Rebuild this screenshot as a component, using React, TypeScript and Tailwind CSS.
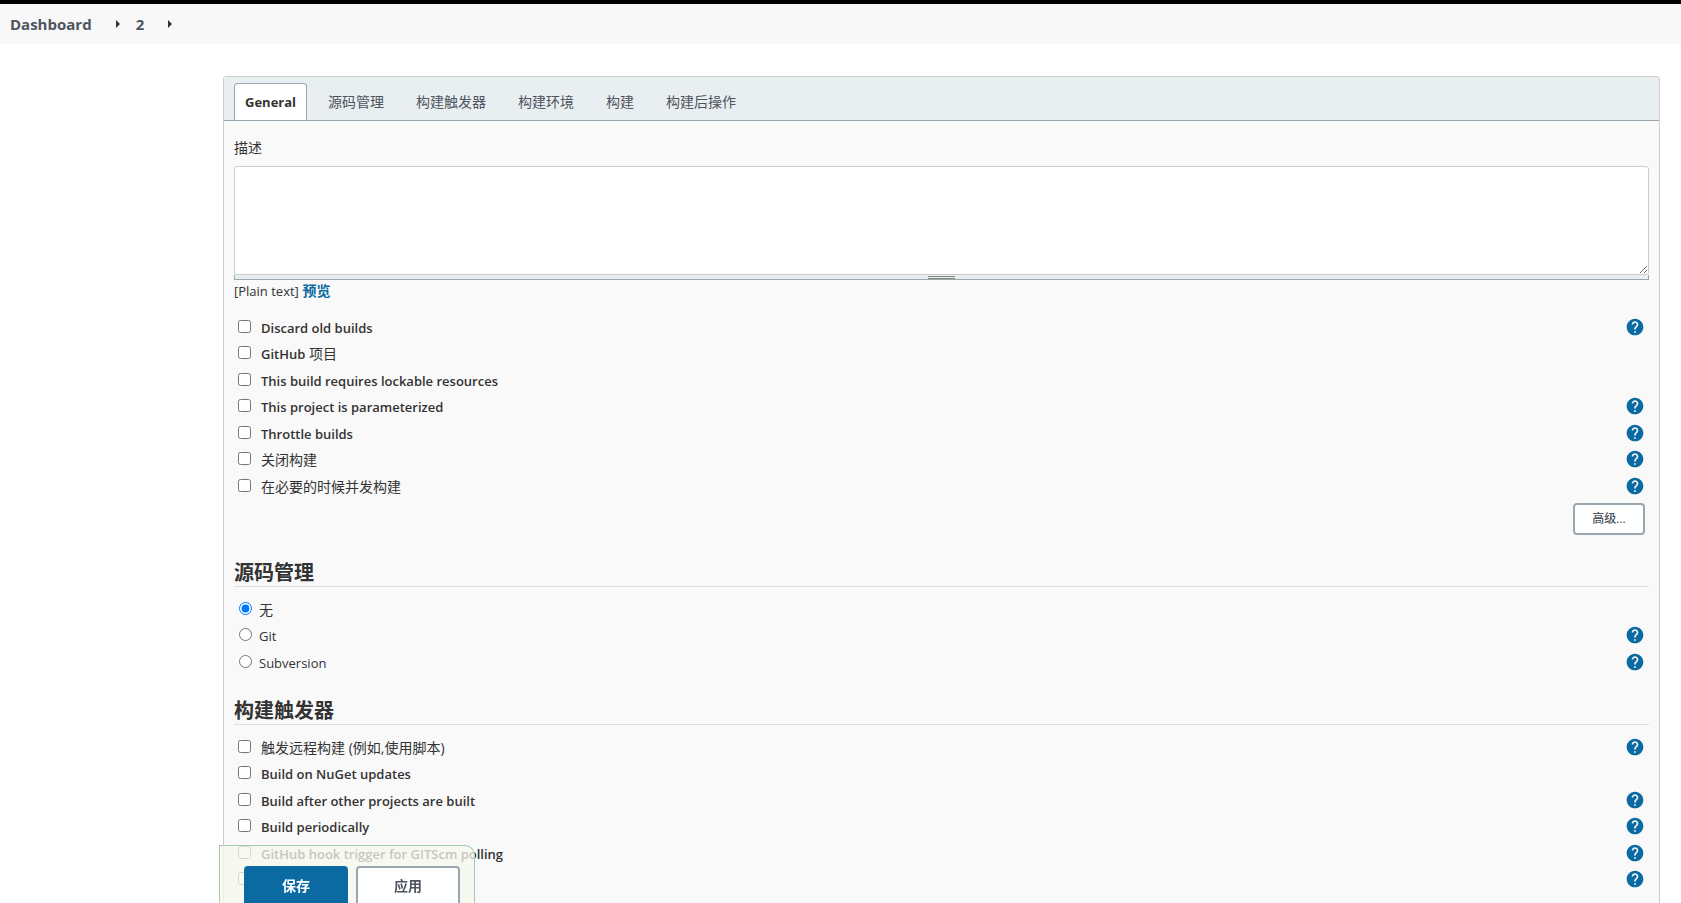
import React from "react";
import { MdHelp } from "react-icons/md";

interface OptionProps {
    label: string;
    suffix?: string;
    help?: boolean;
    light?: boolean;
}

interface ScmProps {
    label: string;
    value: string;
    help?: boolean;
}

const tabs = ["General", "源码管理", "构建触发器", "构建环境", "构建", "构建后操作"];

const generalOptions: OptionProps[] = [
    { label: "Discard old builds", help: true },
    { label: "GitHub", suffix: "项目" },
    { label: "This build requires lockable resources" },
    { label: "This project is parameterized", help: true },
    { label: "Throttle builds", help: true },
    { label: "关闭构建", help: true, light: true },
    { label: "在必要的时候并发构建", help: true, light: true },
];

const scmOptions: ScmProps[] = [
    { label: "无", value: "none" },
    { label: "Git", value: "git", help: true },
    { label: "Subversion", value: "svn", help: true },
];

const triggerOptions: OptionProps[] = [
    { label: "触发远程构建 (例如,使用脚本)", help: true, light: true },
    { label: "Build on NuGet updates" },
    { label: "Build after other projects are built", help: true },
    { label: "Build periodically", help: true },
    { label: "GitHub hook trigger for GITScm polling", help: true },
    { label: "", help: true },
];

const Caret = () => (
    <svg viewBox="0 0 4 8" className="h-2 w-1 fill-[#333333]">
        <path d="M0 0L4 4L0 8Z" />
    </svg>
);

const HelpButton = ({ label }: { label: string }) => (
    <button type="button" aria-label={`Help ${label}`} className="mt-px text-[#0b6aa2]">
        <MdHelp size={20} />
    </button>
);

const OptionList = ({ options }: { options: OptionProps[] }) => (
    <ul className="leading-6">
        {options.map((opt) => (
            <li key={opt.label} className="flex items-start justify-between px-1 odd:h-[26px] even:h-[27px]">
                <label className="flex items-start gap-[10px]">
                    <input type="checkbox" aria-label={opt.label || "SCM"} className="mt-1 size-[13px]" />
                    <span>
                        <span className={opt.light ? "" : "text-[13px] font-semibold"}>{opt.label}</span>
                        {opt.suffix && ` ${opt.suffix}`}
                    </span>
                </label>
                {opt.help && <HelpButton label={opt.label} />}
            </li>
        ))}
    </ul>
);

const SectionTitle = ({ children }: { children: React.ReactNode }) => (
    <h2 className="border-b border-[#dddddd] text-xl leading-[27px] font-bold">{children}</h2>
);

const App = () => {
    return (
        <div className="h-screen overflow-hidden bg-white font-['Open_Sans','Noto_Sans_CJK_SC',sans-serif] text-[14px] leading-[22px] text-[#333333]">
            <header className="border-t-4 border-black bg-[#f8f8f8]">
                <nav className="flex h-10 items-center pl-[10px] text-[15px] font-bold text-[#4d545d]">
                    <a href="#">Dashboard</a>
                    <span className="pr-4 pl-6">
                        <Caret />
                    </span>
                    <a href="#">2</a>
                    <span className="pl-6">
                        <Caret />
                    </span>
                </nav>
            </header>

            <main className="mt-8 mr-[21px] ml-[223px] h-screen rounded-t-[3px] border border-[#cccccc] bg-[#f9f9f9]">
                <nav className="flex h-11 items-end gap-[10px] border-b border-[#98a7b0] bg-[#e9eef1] px-[10px]">
                    {tabs.map((tab, i) => (
                        <a
                            key={tab}
                            href="#"
                            className={
                                i === 0
                                    ? "h-[37px] rounded-t border border-b-0 border-[#98a7b0] bg-white px-[10px] text-[13px] leading-9 font-bold text-[#333333]"
                                    : "h-[37px] border border-b-0 border-transparent px-[10px] leading-9 text-[#4d545d]"
                            }
                        >
                            {tab}
                        </a>
                    ))}
                </nav>

                <form className="px-[10px]">
                    <label htmlFor="description" className="mt-4 block">
                        描述
                    </label>
                    <textarea
                        id="description"
                        className="mt-[7px] block h-[109px] w-full rounded-[3px] border border-[#cccccc] bg-white"
                    />
                    <div className="flex h-[5px] flex-col items-center gap-px border border-t-0 border-[#98a7b0] bg-[#e9eef1] pt-px">
                        <span className="h-px w-[27px] shrink-0 bg-[#84887f]" />
                        <span className="h-px w-[27px] shrink-0 bg-[#84887f]" />
                    </div>
                    <p>
                        <span className="text-[13px]">[Plain text]</span>{" "}
                        <a href="#" className="font-bold text-[#0b6aa2]">
                            预览
                        </a>
                    </p>

                    <div className="mt-[14px]">
                        <OptionList options={generalOptions} />
                    </div>
                    <div className="mt-[2px] flex justify-end pr-1">
                        <button
                            type="button"
                            className="h-8 w-[72px] rounded border-2 border-[#98a7b0] bg-white text-xs font-medium text-[#4d545d]"
                        >
                            高级...
                        </button>
                    </div>

                    <section className="mt-6">
                        <SectionTitle>源码管理</SectionTitle>
                        <ul className="mt-[11px] leading-6">
                            {scmOptions.map((scm) => (
                                <li
                                    key={scm.value}
                                    className="flex items-start justify-between pr-1 pl-[5px] odd:h-[26px] even:h-[27px]"
                                >
                                    <label className="flex items-start gap-[7px]">
                                        <input
                                            type="radio"
                                            name="scm"
                                            value={scm.value}
                                            defaultChecked={scm.value === "none"}
                                            className="mt-1 size-[13px]"
                                        />
                                        <span className={scm.value === "none" ? "" : "text-[13px]"}>{scm.label}</span>
                                    </label>
                                    {scm.help && <HelpButton label={scm.label} />}
                                </li>
                            ))}
                        </ul>
                    </section>

                    <section className="mt-5">
                        <SectionTitle>构建触发器</SectionTitle>
                        <div className="mt-[11px]">
                            <OptionList options={triggerOptions} />
                        </div>
                    </section>
                </form>
            </main>

            <div className="fixed bottom-0 left-[219px] flex h-[58px] items-start gap-2 overflow-hidden rounded-tr-[10px] border border-b-0 border-[#a5cbb6] bg-[#f6f8ee]/75 px-6 pt-5 pr-[14px] font-bold">
                <button type="button" className="h-10 w-[104px] rounded bg-[#0b6aa2] text-white">
                    保存
                </button>
                <button
                    type="button"
                    className="h-10 w-[104px] rounded border-2 border-[#98a7b0] bg-white text-[#4d545d]"
                >
                    应用
                </button>
            </div>
        </div>
    );
};

export default App;
